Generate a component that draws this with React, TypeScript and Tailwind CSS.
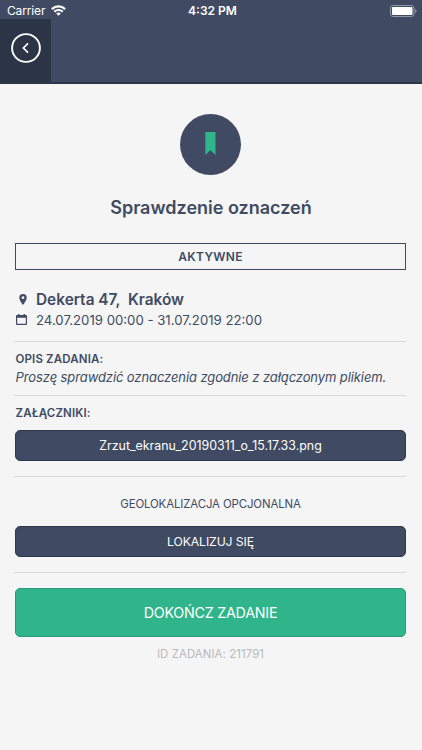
import type { ReactNode } from 'react';

function StatusBar() {
  return (
    <div className="grid h-[19px] grid-cols-3 items-center pt-[3px] text-[12px] leading-4 text-white">
      <div className="flex items-center gap-[6px] pl-[7px]">
        <span className="tracking-[-0.15px]">Carrier</span>
        <svg className="mb-px h-[11px] w-[15px]" viewBox="0 0 15 11" fill="none" stroke="currentColor">
          <path d="M0.9 4.1a9.4 9.4 0 0 1 13.2 0" strokeWidth="2.2" />
          <path d="M3.3 6.7a6 6 0 0 1 8.4 0" strokeWidth="2" />
          <path d="M7.5 10.7 5.2 8.5a3.3 3.3 0 0 1 4.6 0z" fill="currentColor" stroke="none" />
        </svg>
      </div>
      <div className="pl-[3px] text-center font-semibold">4:32 PM</div>
      <div className="flex justify-end pr-[5px]">
        <svg className="h-[12px] w-[27px]" viewBox="0 0 27 12">
          <rect x="0.5" y="0.5" width="23.5" height="11" rx="2.5" fill="none" stroke="#8e97a8" />
          <rect x="2" y="2" width="20.5" height="8" rx="1" fill="#fff" />
          <path d="M25.2 4v4c.8-.3 1.3-1.1 1.3-2s-.5-1.7-1.3-2z" fill="#8e97a8" />
        </svg>
      </div>
    </div>
  );
}

function Header() {
  return (
    <header className="border-b-2 border-[#2d3648] bg-[#404b63]">
      <StatusBar />
      <div className="flex h-[63px]">
        <button className="flex w-[51px] justify-center bg-[#2c3547] pt-[14px]">
          <svg className="h-[30px] w-[30px]" viewBox="0 0 30 30" fill="none" stroke="#fff">
            <circle cx="15" cy="15" r="13.9" strokeWidth="1.9" />
            <path d="M17 10.3 12.4 15l4.6 4.7" strokeWidth="1.7" />
          </svg>
        </button>
      </div>
    </header>
  );
}

function DarkButton({ children }: { children: ReactNode }) {
  return (
    <button className="flex h-[31px] w-full items-center justify-center rounded-[5px] border border-[#2f394d] bg-[#404b63] text-white">
      {children}
    </button>
  );
}

export default function App() {
  return (
    <div className="h-[750px] w-[422px] overflow-hidden bg-[#f5f5f5] font-['Inter','Liberation_Sans',sans-serif] text-[#404b63]">
      <Header />

      <main className="pt-[30px] pr-4 pl-[15px]">
        {/* Task type and name */}
        <div className="mx-auto flex h-[61px] w-[61px] items-center justify-center rounded-full bg-[#404b63]">
          <svg className="mb-[3px] h-[23px] w-[11px]" viewBox="0 0 11 23">
            <path d="M0.3 0.5a.5.5 0 0 1 .5-.5h9.2a.5.5 0 0 1 .5.5V23l-5.1-4.7L0.3 23z" fill="#2fb589" />
          </svg>
        </div>
        <h1 className="mt-[19px] pl-px text-center text-[18px] leading-7 font-semibold">Sprawdzenie oznaczeń</h1>

        {/* Status */}
        <div className="mt-[21px] flex h-[27px] items-center justify-center border border-[#404b63] pt-px text-[12px] font-semibold">
          <span className="tracking-[0.3px]">AKTYWNE</span>
        </div>

        {/* Place and time */}
        <div className="mt-[19px] flex h-[21px] items-center">
          <svg className="ml-1 h-[11px] w-2" viewBox="0 0 8 11" fill="currentColor">
            <path fillRule="evenodd" d="M4 0a3.7 3.7 0 0 0-3.7 3.7C0.3 6.2 4 11 4 11s3.700-4.800 3.700-7.300A3.700 3.700 0 0 0 4 0zm0 2.300a1.400 1.400 0 1 1 0 2.800 1.400 1.400 0 0 1 0-2.800z" />
          </svg>
          <span className="ml-[9px] pt-px text-[15.4px] leading-5 font-semibold whitespace-pre">Dekerta 47,  Kraków</span>
        </div>
        <div className="flex h-[20px] items-center">
          <svg className="mb-px ml-px h-[11px] w-[11px]" viewBox="0 0 11 11" fill="currentColor">
            <path fillRule="evenodd" d="M2 0h1.4v1h4.2V0H9v1h1a1 1 0 0 1 1 1v8a1 1 0 0 1-1 1H1a1 1 0 0 1-1-1V2a1 1 0 0 1 1-1h1zM1.2 3.8v6h8.6v-6z" />
          </svg>
          <span className="ml-[9px] text-[13.2px] leading-4">24.07.2019 00:00 - 31.07.2019 22:00</span>
        </div>

        {/* Description */}
        <section className="mt-[11px] border-t border-[#d9d9d9] pt-[8px]">
          <h2 className="h-[18px] pl-[0.5px] text-[11.5px] leading-[19px] font-semibold tracking-[0.15px]">OPIS ZADANIA:</h2>
          <p className="h-[19px] pl-[0.5px] text-[13px] leading-[18px] tracking-[-0.1px] whitespace-nowrap italic">
            Proszę sprawdzić oznaczenia zgodnie z załączonym plikiem.
          </p>
        </section>

        {/* Attachments */}
        <section className="mt-[8px] border-t border-[#d9d9d9] pt-[8px]">
          <h2 className="mb-[8px] h-[18px] pl-[0.5px] text-[11.5px] leading-[19px] font-semibold tracking-[0.15px]">ZAŁĄCZNIKI:</h2>
          <DarkButton>
            <span className="pt-px text-[12.4px]">Zrzut_ekranu_20190311_o_15.17.33.png</span>
          </DarkButton>
        </section>

        {/* Geolocation */}
        <section className="mt-[15px] border-t border-[#d9d9d9] pt-[18px]">
          <p className="mb-[13px] h-[18px] text-center text-[11.4px] leading-[18px] tracking-[-0.1px]">
            GEOLOKALIZACJA OPCJONALNA
          </p>
          <DarkButton>
            <span className="pt-px text-[12.2px] tracking-[-0.1px]">LOKALIZUJ SIĘ</span>
          </DarkButton>
        </section>

        {/* Finish task */}
        <section className="mt-[15px] border-t border-[#d9d9d9] pt-[15px]">
          <button className="flex h-[49px] w-full items-center justify-center rounded-[5px] border border-[#299a75] bg-[#2fb589] text-[14.3px] tracking-[-0.25px] text-white">
            DOKOŃCZ ZADANIE
          </button>
          <p className="mt-2 text-center text-[11.4px] leading-[18px] tracking-[0.1px] text-[#b9b9b9]">ID ZADANIA: 211791</p>
        </section>
      </main>
    </div>
  );
}
